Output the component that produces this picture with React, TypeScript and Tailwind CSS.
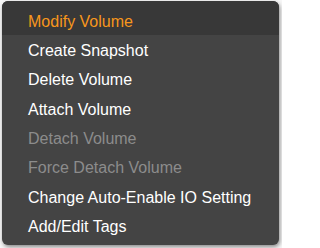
import React from 'react';

interface MenuItem {
  label: string;
  disabled?: boolean;
  active?: boolean;
}

const items: MenuItem[] = [
  { label: 'Modify Volume', active: true },
  { label: 'Create Snapshot' },
  { label: 'Delete Volume' },
  { label: 'Attach Volume' },
  { label: 'Detach Volume', disabled: true },
  { label: 'Force Detach Volume', disabled: true },
  { label: 'Change Auto-Enable IO Setting' },
  { label: 'Add/Edit Tags' },
];

const App: React.FC = () => {
  return (
    <div className="w-[282px] h-[248px] bg-[#f7f7f7] overflow-hidden font-['Liberation_Sans',Arial,sans-serif]">
      <div className="ml-[2px] mt-[1px] w-[277px] h-[244px] rounded-[6px] bg-[#444444] shadow-[1px_2px_4px_rgba(0,0,0,0.45)] overflow-hidden">
        {items.map((item, i) => (
          <div
            key={item.label}
            className={
              (i === 0 ? 'h-[34px] pt-[8px] ' : 'h-[29.3px] pt-[3px] ') +
              'flex items-center pl-[26px] text-[16px] leading-none whitespace-nowrap ' +
              (item.active
                ? 'bg-[#383838] text-[#f7961c]'
                : item.disabled
                ? 'text-[#8c8c8c]'
                : 'text-white')
            }
          >
            {item.label}
          </div>
        ))}
      </div>
    </div>
  );
};

export default App;
